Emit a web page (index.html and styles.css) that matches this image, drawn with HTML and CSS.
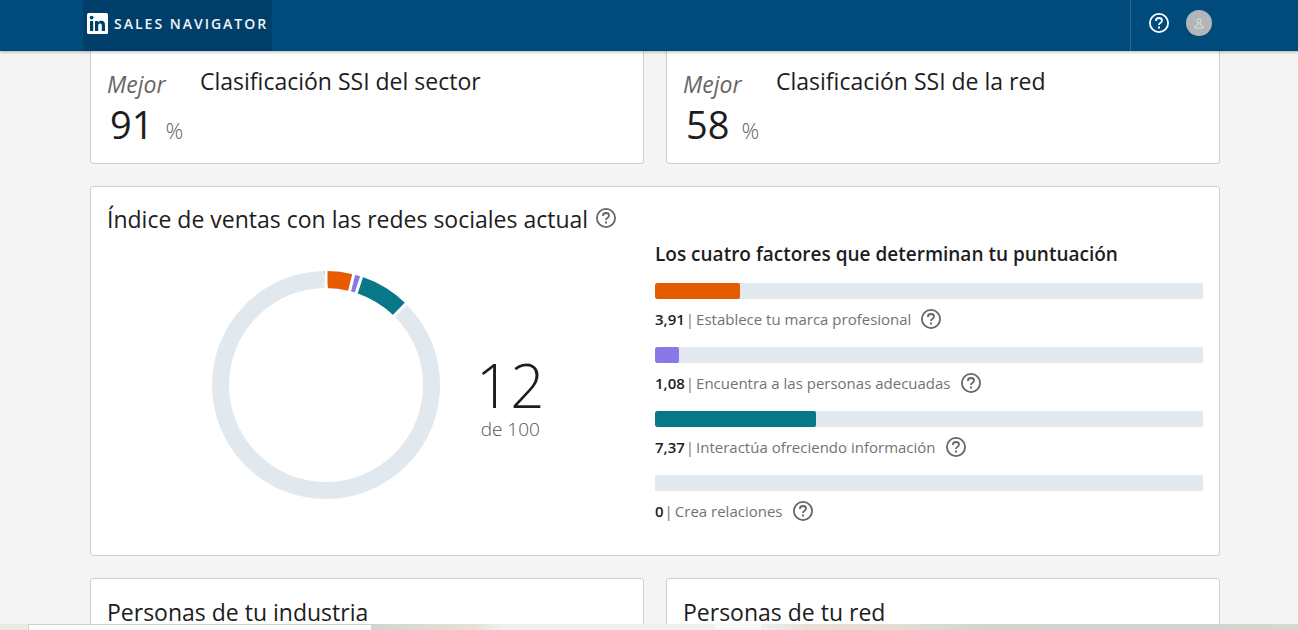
FILE: index.html
```html
<!DOCTYPE html>
<html lang="es">
<head>
<meta charset="utf-8">
<meta name="viewport" content="width=device-width, initial-scale=1">
<title>Sales Navigator</title>
<link rel="stylesheet" href="styles.css">
</head>
<body>
<svg class="defs" aria-hidden="true">
  <symbol id="help" viewBox="0 0 20 20">
    <circle cx="10" cy="10" r="9.100" fill="none" stroke="currentColor" stroke-width="1.800"/>
    <path d="M7 7.900V7.400C7 5.800 8.300 5 10 5s3 .9 3 2.500c0 1.400-.8 2-1.700 2.500-.8.5-1.300.8-1.300 1.900" fill="none" stroke="currentColor" stroke-width="1.800"/>
    <path d="M9 13.500h2v2H9z" fill="currentColor"/>
  </symbol>
</svg>
<header class="topbar">
  <a class="brand" href="#">
    <svg class="brand-logo" viewBox="0 0 21 21" aria-hidden="true">
      <rect width="21" height="21" rx="1.500" fill="#fff"/>
      <circle cx="4.600" cy="4.600" r="1.900" fill="#003f69"/>
      <path d="M3 8h3.200v10H3zM8 8h3v1.400c.6-1 1.700-1.700 3.200-1.700 3 0 3.800 1.900 3.800 4.700V18h-3.200v-5c0-1.400-.2-2.500-1.700-2.500-1.600 0-1.900 1.200-1.900 2.500v5H8z" fill="#003f69"/>
    </svg>
    <span class="brand-name">SALES NAVIGATOR</span>
  </a>
  <div class="tools">
    <button class="icon-button" type="button" aria-label="Ayuda"><svg class="help"><use href="#help"/></svg></button>
    <button class="avatar" type="button" aria-label="Perfil">
      <svg class="avatar-icon" viewBox="0 0 10 11" aria-hidden="true"><circle cx="5" cy="3" r="2"/><path d="M4 5v1.500L1 8.200V10h8V8.200L6 6.500V5"/></svg>
    </button>
  </div>
</header>
<main class="content">
  <div class="row">
    <section class="card rank">
      <div class="rank-score"><em class="rank-label">Mejor</em><div class="rank-value"><span class="rank-number">91</span><span class="percent">%</span></div></div>
      <h2 class="title">Clasificación SSI del sector</h2>
    </section>
    <section class="card rank">
      <div class="rank-score"><em class="rank-label">Mejor</em><div class="rank-value"><span class="rank-number">58</span><span class="percent">%</span></div></div>
      <h2 class="title">Clasificación SSI de la red</h2>
    </section>
  </div>
  <section class="card index">
    <div class="index-main">
      <div class="heading">
        <h2 class="title">Índice de ventas con las redes sociales actual</h2>
        <button class="icon-button" type="button" aria-label="Más información"><svg class="help"><use href="#help"/></svg></button>
      </div>
      <div class="chart">
        <svg class="donut" viewBox="-114 -114 228 228" role="img" aria-label="12 de 100">
          <g fill="none" stroke-width="17" transform="rotate(-90)">
            <circle r="105.500" stroke="#e1e8ee"/>
            <circle r="105.500" pathLength="100" stroke="#e65a00" stroke-dasharray="3.910 96.090"/>
            <circle r="105.500" pathLength="100" stroke="#8979e8" stroke-dasharray="1.300 98.700" stroke-dashoffset="-3.910"/>
            <circle r="105.500" pathLength="100" stroke="#087889" stroke-dasharray="7.150 92.850" stroke-dashoffset="-5.210"/>
          </g>
          <g stroke="#fff" stroke-width="3">
            <path d="M0-96v-19"/>
            <path d="M0-96v-19" transform="rotate(14.080)"/>
            <path d="M0-96v-19" transform="rotate(18.200)"/>
            <path d="M0-96v-19" transform="rotate(44.500)"/>
          </g>
        </svg>
        <div class="score"><span class="score-number">12</span><span class="score-total">de 100</span></div>
      </div>
    </div>
    <div class="factors">
      <h3 class="subtitle">Los cuatro factores que determinan tu puntuación</h3>
      <div class="factor">
        <div class="track"><div class="fill brand-fill" style="width:15.600%"></div></div>
        <div class="factor-label"><strong>3,91</strong><span class="divider">|</span><span class="factor-name">Establece tu marca profesional</span><button class="icon-button" type="button" aria-label="Más información"><svg class="help"><use href="#help"/></svg></button></div>
      </div>
      <div class="factor">
        <div class="track"><div class="fill people-fill" style="width:4.300%"></div></div>
        <div class="factor-label"><strong>1,08</strong><span class="divider">|</span><span class="factor-name">Encuentra a las personas adecuadas</span><button class="icon-button" type="button" aria-label="Más información"><svg class="help"><use href="#help"/></svg></button></div>
      </div>
      <div class="factor">
        <div class="track"><div class="fill insight-fill" style="width:29.400%"></div></div>
        <div class="factor-label"><strong>7,37</strong><span class="divider">|</span><span class="factor-name">Interactúa ofreciendo información</span><button class="icon-button" type="button" aria-label="Más información"><svg class="help"><use href="#help"/></svg></button></div>
      </div>
      <div class="factor">
        <div class="track"></div>
        <div class="factor-label"><strong>0</strong><span class="divider">|</span><span class="factor-name">Crea relaciones</span><button class="icon-button" type="button" aria-label="Más información"><svg class="help"><use href="#help"/></svg></button></div>
      </div>
    </div>
  </section>
  <div class="row">
    <section class="card people"><h2 class="title">Personas de tu industria</h2></section>
    <section class="card people"><h2 class="title">Personas de tu red</h2></section>
  </div>
</main>
<footer class="desk"><div class="desk-field"></div><div class="desk-strip"></div></footer>
</body>
</html>
```
FILE: styles.css
```css
* { box-sizing: border-box; }
body {
  margin: 0;
  height: 100vh;
  display: flex;
  flex-direction: column;
  overflow: hidden;
  background: #f4f4f4;
  color: #1d1d1d;
  font-family: "Segoe UI", "Open Sans", "Noto Sans", sans-serif;
}
h2, h3 { margin: 0; }
button { border: 0; padding: 0; background: none; color: inherit; }
.defs { display: none; }
.topbar {
  flex: none;
  height: 51px;
  display: flex;
  justify-content: space-between;
  padding: 0 86px 0 83px;
  background: #004b7c;
  color: #fff;
  box-shadow: 0 1px 3px rgba(0, 0, 0, .3);
  z-index: 1;
}
.brand {
  display: flex;
  align-items: center;
  gap: 6px;
  padding: 0 4px 4px 4px;
  background: #003f69;
  color: #f0f4f7;
  text-decoration: none;
}
.brand-logo { width: 21px; height: 21px; }
.brand-name { font-size: 14px; font-weight: 600; letter-spacing: 2px; white-space: nowrap; }
.tools {
  display: flex;
  align-items: center;
  gap: 17px;
  padding: 0 0 5px 18px;
  border-left: 1px solid #2c6890;
}
.icon-button { display: flex; flex: none; }
.help { width: 20px; height: 20px; }
.avatar {
  width: 26px;
  height: 26px;
  display: grid;
  place-items: center;
  border-radius: 50%;
  background: #b3b6b9;
}
.avatar-icon { width: 10px; height: 11px; fill: none; stroke: #dcdfe1; stroke-width: 1; }
.content {
  flex: 1;
  min-height: 0;
  overflow: hidden;
  display: flex;
  flex-direction: column;
  gap: 22px;
  padding: 0 78px 0 90px;
}
.row { flex: none; display: grid; grid-template-columns: 1fr 1fr; gap: 22px; }
.card { background: #fff; border: 1px solid #cfcfcf; border-radius: 3px; }
.title { font-size: 23px; line-height: 32px; font-weight: 400; }
.rank {
  display: flex;
  gap: 16px;
  padding: 14px 16px 9px;
  border-top: 0;
  border-radius: 0 0 3px 3px;
}
.rank-score { width: 77px; }
.rank-label { display: block; padding-top: 3px; font-size: 23px; line-height: 32px; font-weight: 400; color: #666; }
.rank-value { display: flex; align-items: baseline; gap: 12px; padding-left: 3px; line-height: 48px; }
.rank-number { font-size: 38px; }
.percent { font-size: 22px; font-weight: 300; color: #666; }
.index { flex: none; display: grid; grid-template-columns: 1fr 1fr; padding: 16px; }
.heading { display: flex; align-items: center; gap: 8px; height: 32px; white-space: nowrap; }
.index .help { color: #666; }
.heading .icon-button { padding-bottom: 2px; }
.chart { display: flex; align-items: center; gap: 36px; padding: 36px 0 0 105px; }
.donut { width: 228px; height: 228px; flex: none; }
.score { display: flex; flex-direction: column; align-items: center; padding-top: 28px; }
.score-number { font-size: 60px; line-height: 60px; font-weight: 300; }
.score-total { font-size: 19px; line-height: 28px; font-weight: 300; color: #555; }
.factors { padding-top: 35px; }
.subtitle { margin-bottom: 13px; font-size: 19px; line-height: 32px; font-weight: 600; }
.factor { height: 64px; }
.track { height: 16px; border-radius: 2px; background: #e1e8ee; overflow: hidden; }
.fill { height: 100%; border-radius: 2px; }
.brand-fill { background: #e65a00; }
.people-fill { background: #8979e8; }
.insight-fill { background: #087889; }
.factor-label {
  display: flex;
  align-items: center;
  padding-top: 8px;
  font-size: 15px;
  line-height: 24px;
  font-weight: 400;
  color: #737373;
}
.factor-label strong { font-weight: 600; color: #1d1d1d; }
.divider { padding: 0 2px 0 1px; }
.factor-name { padding-right: 10px; }
.people { min-height: 120px; padding: 17px 16px; }
.desk {
  flex: none;
  height: 6px;
  display: flex;
  padding-left: 28px;
  background: #ece8e2;
}
.desk-field { flex: 0 0 344px; border: 1px solid #cfcfcf; border-bottom: 0; background: #fff; }
.desk-strip {
  flex: 1;
  background: linear-gradient(90deg, #d6d3cf, #e8e0d7 11%, #efefef 14%, #efefef 37%, #f8f8f8 37%, #f8f8f8 42%, #efefef 42%, #e8ded7 47%, #e5ddd5 56%, #d6d3cf 66%, #d4d2cf 90%, #dbd7d0);
}
```
